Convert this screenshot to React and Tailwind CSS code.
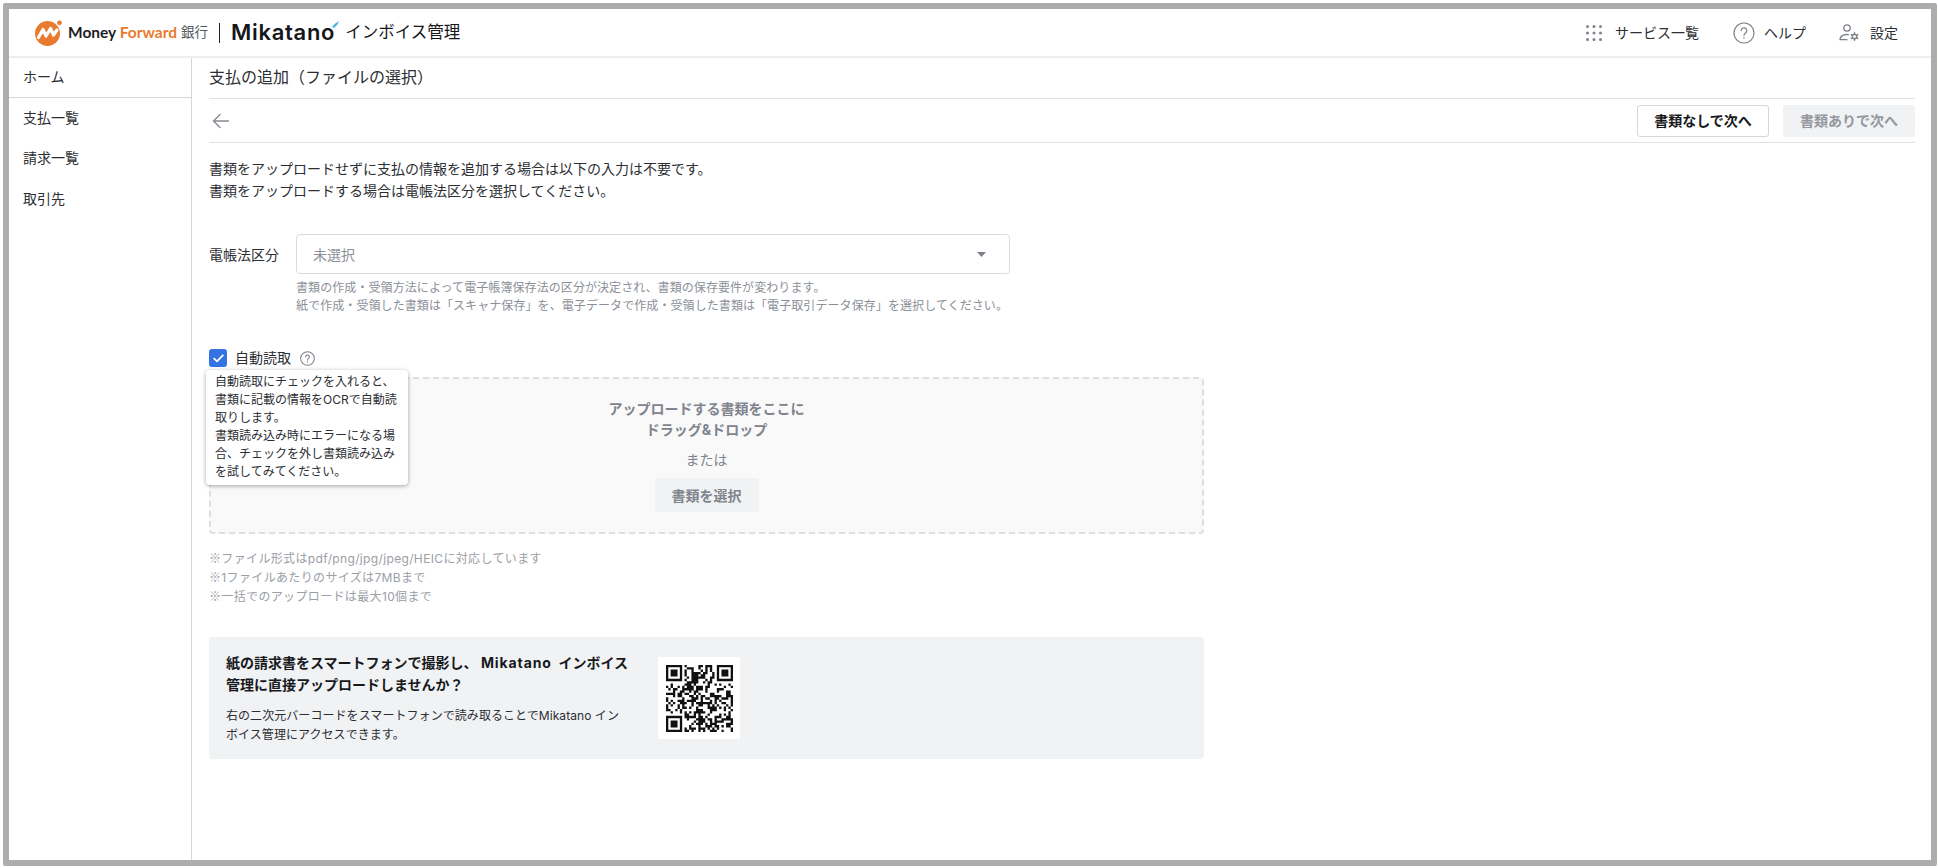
const sans = { fontFamily: "Inter, 'Noto Sans CJK JP', sans-serif" };
const cjk = { fontFamily: "'Noto Sans CJK JP', sans-serif" };

// pseudo random modules for the QR block, fixed seed so the picture stays the same
const buildQr = () => {
  const size = 29;
  let seed = 0x2f6e2b1;
  let d = '';
  const inFinder = (x, y, ox, oy) => x >= ox && x < ox + 8 && y >= oy && y < oy + 8;
  const finderOn = (x, y, ox, oy) => {
    const a = x - ox;
    const b = y - oy;
    if (a > 6 || b > 6 || a < 0 || b < 0) return false;
    if (a === 0 || a === 6 || b === 0 || b === 6) return true;
    return a >= 2 && a <= 4 && b >= 2 && b <= 4;
  };
  for (let y = 0; y < size; y++) {
    for (let x = 0; x < size; x++) {
      seed ^= seed << 13;
      seed ^= seed >>> 17;
      seed ^= seed << 5;
      let on = (seed & 7) < 4;
      if (inFinder(x, y, 0, 0)) on = finderOn(x, y, 0, 0);
      else if (inFinder(x, y, 21, 0)) on = finderOn(x, y, 22, 0);
      else if (inFinder(x, y, 0, 21)) on = finderOn(x, y, 0, 22);
      if (on) d += `M${x} ${y}h1v1h-1z`;
    }
  }
  return d;
};

const LogoMark = () => (
  <svg width="27" height="26" viewBox="0 0 27 26" className="shrink-0">
    <circle cx="12.5" cy="13.5" r="12.5" fill="#E87B2E" />
    <path d="M3.5 17.5 L8 9.5 L11 16 L15.5 8.5 L18.5 15 L22 10" fill="none" stroke="#fff" strokeWidth="3.2" strokeLinejoin="round" strokeLinecap="round" />
    <circle cx="24.5" cy="2.8" r="2.4" fill="#E87B2E" />
  </svg>
);

const GridIcon = () => (
  <svg width="16" height="16" viewBox="0 0 16 16" fill="#7f848c">
    {[1.5, 8, 14.5].map((y) =>
      [1.5, 8, 14.5].map((x) => <circle key={`${x}-${y}`} cx={x} cy={y} r="1.5" />)
    )}
  </svg>
);

const HelpIcon = () => (
  <svg width="22" height="22" viewBox="0 0 22 22" fill="none" stroke="#7b8088" strokeWidth="1.2">
    <circle cx="11" cy="11" r="10" />
    <path d="M8.2 8.6a2.8 2.8 0 1 1 4.4 2.3c-1 .7-1.6 1.2-1.6 2.4" strokeLinecap="round" />
    <circle cx="11" cy="16" r=".8" fill="#7b8088" stroke="none" />
  </svg>
);

const UserGearIcon = () => (
  <svg width="21" height="18" viewBox="0 0 21 18" fill="none" stroke="#7b8088" strokeWidth="1.3">
    <circle cx="8" cy="4" r="3.2" />
    <path d="M1 15.5c0-3 3-5 6.5-5 .7 0 1.3.1 1.9.2M1 15.7h7" strokeLinecap="round" />
    <circle cx="15.5" cy="12.5" r="2.2" />
    <path d="M15.5 8.8v1.4M15.5 14.8v1.4M12.3 10.6l1.2.7M17.5 13.7l1.2.7M12.3 14.4l1.2-.7M17.5 11.3l1.2-.7" strokeLinecap="round" strokeWidth="1.5" />
  </svg>
);

const Header = () => (
  <header className="h-[49px] shrink-0 flex items-center justify-between pl-[26px] pr-[33px] border-b-2 border-[#eeeeee]">
    <div className="flex items-center">
      <LogoMark />
      <span className="ml-[6px] text-[15.5px] font-bold text-[#1d1d1f] whitespace-nowrap" style={{ fontFamily: "Lato, sans-serif" }}>
        Money <span className="text-[#E87B2E]">Forward</span>
      </span>
      <span className="ml-[4px] text-[13.5px] text-[#55585c]">銀行</span>
      <div className="ml-[11px] w-px h-[20px] bg-[#222]" />
      <div className="relative ml-[11px]">
        <span className="text-[22px] font-semibold tracking-[0.7px] text-[#15171a]" style={{ fontFamily: "Inter, sans-serif" }}>
          Mikatano
        </span>
        <svg width="7" height="7" viewBox="0 0 7 7" className="absolute -right-[4px] top-[5px]">
          <path d="M0 6 Q3 2 7 0 Q6 4 2 7 Z" fill="#4FB4E6" />
        </svg>
      </div>
      <span className="ml-[10px] text-[16.5px] text-[#15171a] whitespace-nowrap">インボイス管理</span>
    </div>
    <div className="flex items-center text-[14px] text-[#2b2e33]">
      <GridIcon />
      <span className="ml-[13px]">サービス一覧</span>
      <div className="ml-[34px]"><HelpIcon /></div>
      <span className="ml-[9px]">ヘルプ</span>
      <div className="ml-[33px]"><UserGearIcon /></div>
      <span className="ml-[10px]">設定</span>
    </div>
  </header>
);

const Sidebar = () => (
  <aside className="w-[183px] shrink-0 border-r border-[#d5d8da] text-[14px] text-[#2b2e33]">
    <div className="h-[40px] flex items-center pl-[14px] pb-[2px] border-b border-[#d5d8da]">ホーム</div>
    <div className="h-[40px] flex items-center pl-[14px] pb-px">支払一覧</div>
    <div className="h-[40px] flex items-center pl-[14px] pb-px">請求一覧</div>
    <div className="h-[40px] flex items-center pl-[14px]">取引先</div>
  </aside>
);

const QrBlock = () => (
  <div className="w-[82px] h-[82px] shrink-0 bg-white flex items-center justify-center">
    <svg width="67" height="67" viewBox="0 0 29 29" fill="#111">
      <path d={buildQr()} />
    </svg>
  </div>
);

const Main = () => (
  <main className="flex-1 min-w-0 pl-[17px] pr-[16px] text-[#2b2e33]">
    <div className="h-[41px] flex items-center pb-[2px] border-b border-[#dfe1e3] text-[16px]">
      支払の追加（ファイルの選択）
    </div>
    <div className="h-[44px] flex items-center justify-between border-b border-[#dfe1e3]">
      <svg width="18" height="16" viewBox="0 0 18 16" fill="none" stroke="#868b93" strokeWidth="1.4" className="ml-[3px]" strokeLinecap="round" strokeLinejoin="round">
        <path d="M16.5 8H1.5M8 1.5L1.5 8l6.5 6.5" />
      </svg>
      <div className="flex items-center gap-[14px]">
        <button className="w-[132px] h-[32px] rounded-[3px] border border-[#d5d8da] bg-white text-[14px] font-bold text-[#17191c]">
          書類なしで次へ
        </button>
        <button className="w-[132px] h-[32px] rounded-[3px] bg-[#f1f2f4] text-[14px] font-bold text-[#93979e]">
          書類ありで次へ
        </button>
      </div>
    </div>

    <p className="mt-[15px] text-[14px] leading-[22px]">
      書類をアップロードせずに支払の情報を追加する場合は以下の入力は不要です。
      <br />
      書類をアップロードする場合は電帳法区分を選択してください。
    </p>

    <div className="mt-[32px] flex items-center">
      <label className="w-[87px] text-[14px]">電帳法区分</label>
      <div className="w-[714px] h-[40px] flex items-center justify-between pl-[16px] pr-[23px] border border-[#d9dcde] rounded-[4px] text-[14px] text-[#8b9098]">
        未選択
        <svg width="9" height="5" viewBox="0 0 9 5">
          <path d="M0 0h9L4.5 5z" fill="#7b808a" />
        </svg>
      </div>
    </div>
    <p className="mt-[5px] ml-[87px] text-[12px] tracking-[0.08px] leading-[18px] text-[#8b9098]">
      書類の作成・受領方法によって電子帳簿保存法の区分が決定され、書類の保存要件が変わります。
      <br />
      紙で作成・受領した書類は「スキャナ保存」を、電子データで作成・受領した書類は「電子取引データ保存」を選択してください。
    </p>

    <div className="relative mt-[34px] h-[18px] flex items-center">
      <span className="w-[18px] h-[18px] rounded-[3px] bg-[#3573e3] flex items-center justify-center">
        <svg width="11" height="9" viewBox="0 0 11 9" fill="none" stroke="#fff" strokeWidth="1.8" strokeLinecap="round" strokeLinejoin="round">
          <path d="M1.2 4.6L4 7.4 9.8 1.4" />
        </svg>
      </span>
      <span className="ml-[8px] pb-px text-[14px]">自動読取</span>
      <svg width="15" height="15" viewBox="0 0 22 22" fill="none" stroke="#7b8088" strokeWidth="1.5" className="ml-[9px]">
        <circle cx="11" cy="11" r="10" />
        <path d="M8.2 8.6a2.8 2.8 0 1 1 4.4 2.3c-1 .7-1.6 1.2-1.6 2.4" strokeLinecap="round" />
        <circle cx="11" cy="16" r="1" fill="#7b8088" stroke="none" />
      </svg>
      <div className="absolute z-10 left-[-3px] top-[21px] w-[202px] h-[115px] pt-[3px] pl-[9px] pr-[8px] bg-white rounded-[4px] shadow-[0_1px_4px_rgba(0,0,0,0.35)] text-[12px] leading-[18px] text-[#2b2e33]">
        自動読取にチェックを入れると、書類に記載の情報をOCRで自動読取りします。
        <br />
        書類読み込み時にエラーになる場合、チェックを外し書類読み込みを試してみてください。
      </div>
    </div>

    <div className="mt-[10px] w-[995px] h-[157px] flex flex-col items-center bg-[#f9f9fa] border-2 border-dashed border-[#dcdee0] rounded-[4px] pt-[19px]">
      <p className="text-[14px] leading-[21px] font-bold text-[#7f848c] text-center">
        アップロードする書類をここに
        <br />
        ドラッグ&ドロップ
      </p>
      <p className="mt-[9px] text-[14px] leading-[21px] text-[#7f848c]">または</p>
      <button className="mt-[8px] w-[104px] h-[34px] rounded-[3px] bg-[#f1f2f4] text-[14px] font-bold text-[#7f848c]">
        書類を選択
      </button>
    </div>

    <p className="mt-[15px] text-[12px] tracking-[0.35px] leading-[18px] text-[#9a9ea5]">
      <span style={cjk}>※</span>ファイル形式はpdf/png/jpg/jpeg/HEICに対応しています
      <br />
      <span style={cjk}>※</span>1ファイルあたりのサイズは7MBまで
      <br />
      <span style={cjk}>※</span>一括でのアップロードは最大10個まで
    </p>

    <div className="mt-[31px] w-[995px] h-[122px] flex items-center bg-[#f1f2f4] rounded-[4px] pl-[17px]">
      <div className="w-[415px]">
        <p className="text-[14px] leading-[22px] font-bold text-[#17191c]">
          紙の請求書をスマートフォンで撮影し、 <span className="tracking-[0.9px]">Mikatano</span>&nbsp;&nbsp;インボイス
          <br />
          管理に直接アップロードしませんか？
        </p>
        <p className="mt-[10px] text-[12px] tracking-[0.06px] leading-[19px] text-[#2b2e33]">
          右の二次元バーコードをスマートフォンで読み取ることでMikatano イン
          <br />
          ボイス管理にアクセスできます。
        </p>
      </div>
      <div className="ml-[17px]"><QrBlock /></div>
    </div>
  </main>
);

export default function App() {
  return (
    <div className="w-[1938px] h-[868px] bg-white pt-[3px] pl-[3px] pr-px pb-[2px] overflow-hidden" style={sans}>
      <div className="h-full border-[6px] border-[#aeadab] rounded-[2px] bg-white flex flex-col">
        <Header />
        <div className="flex flex-1 min-h-0">
          <Sidebar />
          <Main />
        </div>
      </div>
    </div>
  );
}
